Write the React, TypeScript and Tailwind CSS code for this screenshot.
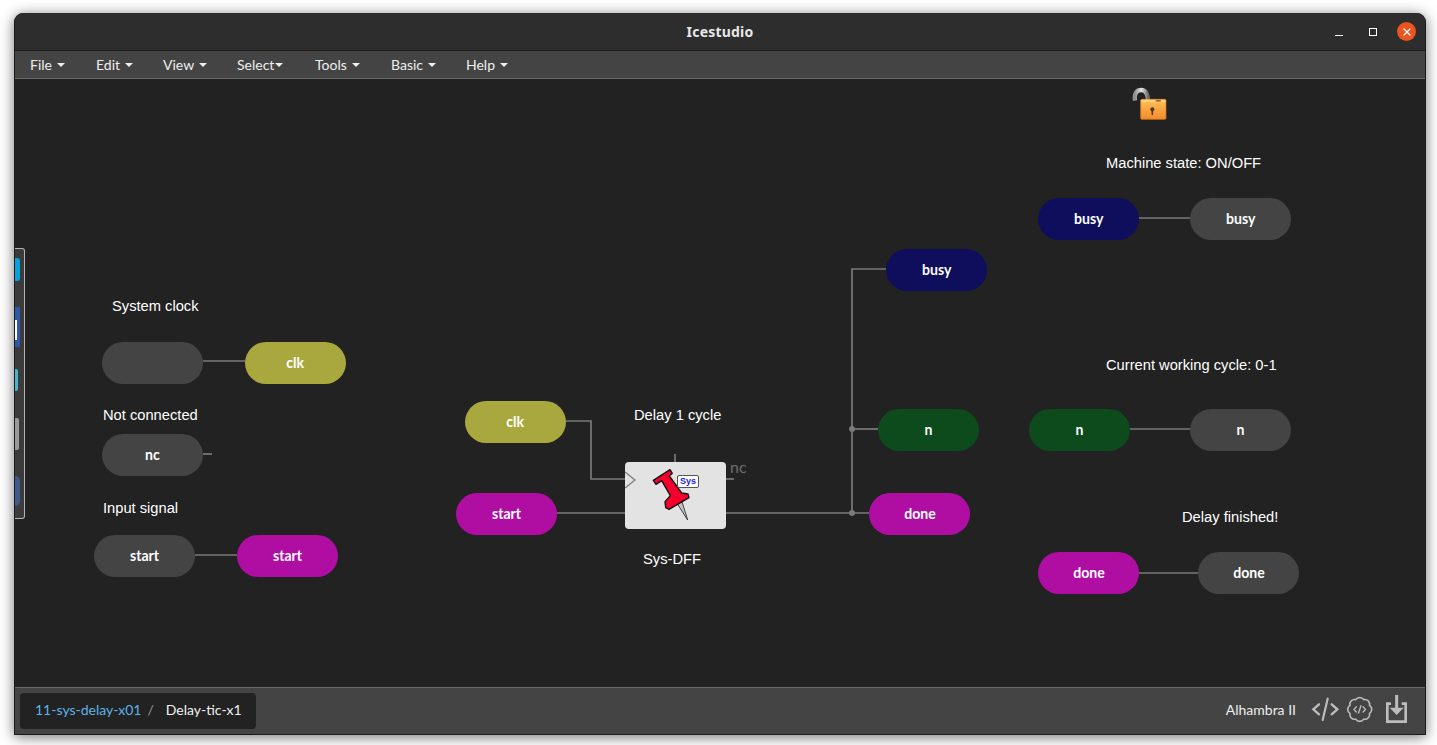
import { X } from "lucide-react";

const menus = [
  { label: "File", width: "w-[66px]", caret: "ml-[5px]" },
  { label: "Edit", width: "w-[67px]", caret: "ml-[5px]" },
  { label: "View", width: "w-[74px]", caret: "ml-[5px]" },
  { label: "Select", width: "w-[78px]", caret: "ml-[1px]" },
  { label: "Tools", width: "w-[76px]", caret: "ml-[5px]" },
  { label: "Basic", width: "w-[75px]", caret: "ml-[5px]" },
  { label: "Help", width: "w-[70px]", caret: "ml-[5px]" },
];

const olive = "bg-[#a8a83f]";
const magenta = "bg-[#b00ea3]";
const navy = "bg-[#0e0e5c]";
const green = "bg-[#0d4a1c]";
const gray = "bg-[#444444]";

const nodes = [
  { label: "", pos: "left-[87px] top-[263px]", color: gray },
  { label: "clk", pos: "left-[230px] top-[263px]", color: olive },
  { label: "nc", pos: "left-[87px] top-[355px]", color: gray },
  { label: "start", pos: "left-[79px] top-[456px]", color: gray },
  { label: "start", pos: "left-[222px] top-[456px]", color: magenta },
  { label: "clk", pos: "left-[450px] top-[322px]", color: olive },
  { label: "start", pos: "left-[441px] top-[414px]", color: magenta },
  { label: "busy", pos: "left-[871px] top-[170px]", color: navy },
  { label: "n", pos: "left-[863px] top-[330px]", color: green },
  { label: "done", pos: "left-[854px] top-[414px]", color: magenta },
  { label: "busy", pos: "left-[1023px] top-[119px]", color: navy },
  { label: "busy", pos: "left-[1175px] top-[119px]", color: gray },
  { label: "n", pos: "left-[1014px] top-[330px]", color: green },
  { label: "n", pos: "left-[1175px] top-[330px]", color: gray },
  { label: "done", pos: "left-[1023px] top-[473px]", color: magenta },
  { label: "done", pos: "left-[1183px] top-[473px]", color: gray },
];

const notes = [
  { text: "System clock", pos: "left-[97px] top-[218px]" },
  { text: "Not connected", pos: "left-[88px] top-[327px]" },
  { text: "Input signal", pos: "left-[88px] top-[420px]" },
  { text: "Delay 1 cycle", pos: "left-[619px] top-[327px]" },
  { text: "Sys-DFF", pos: "left-[628px] top-[471px]" },
  { text: "Machine state: ON/OFF", pos: "left-[1091px] top-[75px]" },
  { text: "Current working cycle: 0-1", pos: "left-[1091px] top-[277px]" },
  { text: "Delay finished!", pos: "left-[1167px] top-[429px]" },
];

const wires = [
  "M203 361H245",
  "M203 454H212",
  "M195 555H237",
  "M566 421H591V479H625",
  "M557 513H625",
  "M726 513H869",
  "M852 513V269H886",
  "M852 429H878",
  "M1139 218H1190",
  "M1130 429H1190",
  "M1139 573H1198",
  "M675 454V462",
  "M726 479H734",
];

function Wires() {
  return (
    <svg className="absolute inset-0" width="1410" height="608" viewBox="15 79 1410 608" fill="none">
      {wires.map((d) => (
        <path key={d} d={d} stroke="#7a7a7a" strokeWidth="1.7" />
      ))}
      <circle cx="852" cy="429" r="3" fill="#7a7a7a" />
      <circle cx="852" cy="513" r="3" fill="#7a7a7a" />
    </svg>
  );
}

function SysBlock() {
  return (
    <div className="absolute left-[610px] top-[383px] h-[67px] w-[101px] rounded-[4px] bg-[#e3e3e3]">
      <svg className="absolute left-0 top-[9px]" width="11" height="18" viewBox="0 0 11 18" fill="none">
        <path d="M0 1L10 9L0 17" stroke="#777777" strokeWidth="1.2" />
      </svg>
      <svg className="absolute left-[20px] top-[3px]" width="60" height="60" viewBox="0 0 180 180">
        <path d="M98 118L128 165L111 110Z" fill="#c4c4c4" stroke="#222222" strokeWidth="2.500" />
        <path
          d="M25 46L75 14L82 25L73 33L110 84L129 87L132 98L72 133L62 128L60 110L76 92L50 47L33 58Z"
          fill="#f5002d"
          stroke="#111111"
          strokeWidth="4"
          strokeLinejoin="round"
        />
      </svg>
      <div className="absolute left-[52px] top-[13px] flex h-[13px] w-[22px] items-center justify-center rounded-[2px] border border-[#555555] bg-white font-['Liberation_Sans',sans-serif] text-[9px] font-bold leading-none text-[#1a1aee]">
        Sys
      </div>
    </div>
  );
}

function Lock() {
  return (
    <svg className="absolute left-[1105px] top-[1px]" width="60" height="45" viewBox="0 0 180 135">
      <defs>
        <linearGradient id="lockBody" x1="0" y1="0" x2="0" y2="1">
          <stop offset="0" stopColor="#ffc25a" />
          <stop offset="1" stopColor="#f58a2a" />
        </linearGradient>
        <linearGradient id="lockShackle" x1="0" y1="0" x2="1" y2="0">
          <stop offset="0" stopColor="#8e8e8e" />
          <stop offset="0.5" stopColor="#e4e4e4" />
          <stop offset="1" stopColor="#6f6f6f" />
        </linearGradient>
      </defs>
      <path d="M45 62C41 38 52 30 64 30C76 30 84 40 84 66" fill="none" stroke="url(#lockShackle)" strokeWidth="13" />
      <rect x="62" y="58" width="76" height="60" rx="4" fill="url(#lockBody)" stroke="#d07a22" strokeWidth="2" />
      <rect x="64" y="59" width="72" height="8" rx="2" fill="#ffd27a" />
      <ellipse cx="115" cy="62" rx="9" ry="3" fill="#a8651f" />
      <circle cx="97" cy="88" r="6" fill="#5a3412" />
      <path d="M94 90H100L99 105H95Z" fill="#5a3412" />
    </svg>
  );
}

function Dock() {
  return (
    <div className="absolute left-0 top-[169px] h-[271px] w-[10px] rounded-r-[3px] border border-l-0 border-[#b5b5b5] bg-[#3b3b3b]">
      <div className="absolute left-0 top-[9px] h-[23px] w-[5px] rounded-r-[3px] bg-[#03a4dc]" />
      <div className="absolute left-0 top-[58px] h-[40px] w-[5px] bg-[#2d5aa8]">
        <div className="absolute left-0 top-[13px] h-[20px] w-[2px] bg-white" />
      </div>
      <div className="absolute left-0 top-[120px] h-[22px] w-[3px] rounded-r-[2px] bg-[#45b5d0]" />
      <div className="absolute left-0 top-[169px] h-[32px] w-[4px] rounded-r-[2px] bg-[#9a9a98]" />
      <div className="absolute left-0 top-[227px] h-[30px] w-[5px] rounded-r-full bg-[#3f5b8c]" />
    </div>
  );
}

function FooterIcons() {
  return (
    <svg className="ml-[9px]" width="110" height="40" viewBox="0 0 330 120" fill="none" stroke="#bdbdbd" strokeLinecap="round">
      {/* code */}
      <path d="M42 40L25 55L42 70M80 40L97 55L80 70" strokeWidth="7" />
      <path d="M68 23L53 87" strokeWidth="6.500" />
      {/* gear */}
      <g transform="translate(121 12) scale(3.600)">
        <path
          d="M3.850 8.620a4 4 0 0 1 4.780-4.770 4 4 0 0 1 6.740 0 4 4 0 0 1 4.780 4.780 4 4 0 0 1 0 6.740 4 4 0 0 1-4.770 4.780 4 4 0 0 1-6.750 0 4 4 0 0 1-4.780-4.770 4 4 0 0 1 0-6.760Z"
          strokeWidth="1.300"
        />
        <path d="M9.200 9.800L7.200 12L9.200 14.200M14.800 9.800L16.800 12L14.800 14.200M13 9L11 15" strokeWidth="1.100" />
      </g>
      {/* upload to board */}
      <path d="M258 38H247V92H302V38H290" strokeWidth="8" strokeLinecap="butt" />
      <path d="M275 12V52" strokeWidth="9" strokeLinecap="butt" />
      <path d="M254 50H296L275 72Z" fill="#bdbdbd" stroke="none" />
    </svg>
  );
}

export default function App() {
  return (
    <div className="h-[745px] w-[1437px] overflow-hidden bg-white pl-[14px] pt-[13px] font-['Lato',sans-serif]">
      <div className="flex h-[722px] w-[1412px] flex-col overflow-hidden rounded-t-[9px] border-x border-b border-[#1c1c1c] bg-[#222222] shadow-[0_2px_14px_rgba(0,0,0,0.55)]">
        <header className="relative flex h-[38px] shrink-0 items-center justify-center border-b border-[#1f1f1f] bg-[#2d2d2d]">
          <span className="font-['Noto_Sans',sans-serif] text-[14px] font-bold tracking-[0.2px] text-[#e8e8e8]">Icestudio</span>
          <div className="absolute right-[9px] top-[9px] flex items-center">
            <div className="mr-[26px] mt-[8px] h-[1px] w-[8px] bg-white" />
            <div className="mr-[20px] h-[8px] w-[8px] border border-white" />
            <div className="flex h-[19px] w-[19px] items-center justify-center rounded-full bg-[#e95420]">
              <X className="h-[12px] w-[12px] text-white" strokeWidth={2.4} />
            </div>
          </div>
        </header>

        <nav className="flex h-[28px] shrink-0 items-center border-b border-[#6a6a6a] bg-[#444444]">
          {menus.map((m) => (
            <div key={m.label} className={`flex ${m.width} items-center pl-[15px] text-[14px] text-[#eeeeee]`}>
              {m.label}
              <span className={`${m.caret} mt-[1px] h-0 w-0 border-x-[4px] border-t-[4px] border-x-transparent border-t-[#eeeeee]`} />
            </div>
          ))}
        </nav>

        <main className="relative flex-1 overflow-hidden bg-[#222222]">
          <Wires />
          <Dock />
          <Lock />
          {notes.map((n) => (
            <span key={n.text} className={`absolute ${n.pos} whitespace-nowrap font-['Liberation_Sans',sans-serif] text-[14.7px] leading-[18px] text-white`}>
              {n.text}
            </span>
          ))}
          {nodes.map((n, i) => (
            <div key={i} className={`absolute ${n.pos} ${n.color} flex h-[42px] w-[101px] items-center justify-center rounded-[21px] pb-[2px] text-white`}>
              <span className="inline-block scale-x-[0.88] text-[16px] font-bold">{n.label}</span>
            </div>
          ))}
          <SysBlock />
          <span className="absolute left-[715px] top-[379px] text-[16px] leading-[18px] text-[#6e6e6e]">nc</span>
        </main>

        <footer className="flex h-[47px] shrink-0 items-center border-t border-[#6a6a6a] bg-[#444444] pl-[5px] pr-[10px]">
          <div className="flex h-[36px] w-[236px] items-center rounded-[4px] bg-[#222222] pb-[4px] pl-[15px] text-[14px]">
            <span className="text-[#5bb4e5]">11-sys-delay-x01</span>
            <span className="ml-[6px] text-[#999999]">/</span>
            <span className="ml-[12px] text-[#f0f0f0]">Delay-tic-x1</span>
          </div>
          <span className="ml-auto pb-[4px] text-[14px] text-[#eeeeee]">Alhambra II</span>
          <FooterIcons />
        </footer>
      </div>
    </div>
  );
}
